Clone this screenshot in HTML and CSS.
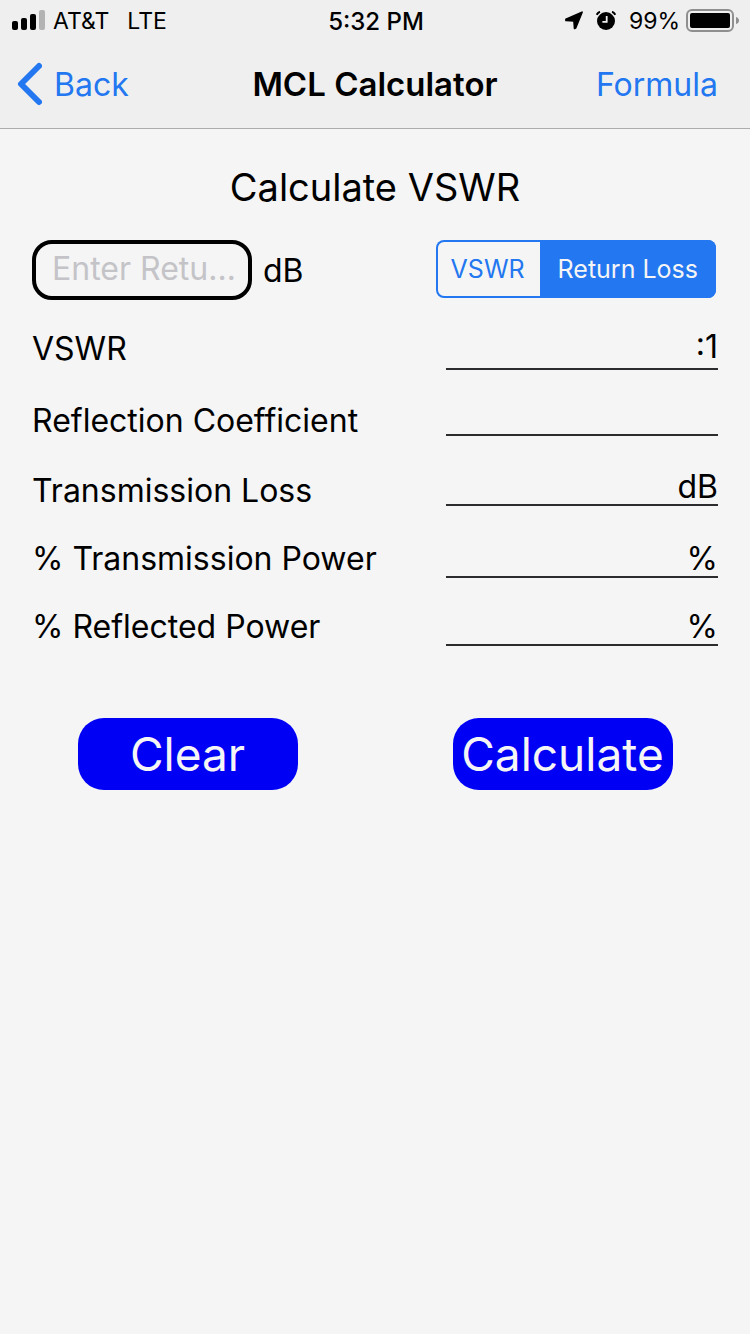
FILE: index.html
```html
<!DOCTYPE html>
<html lang="en">
<head>
  <meta charset="UTF-8" />
  <meta name="viewport" content="width=device-width, initial-scale=1.0"/>
  <title>MCL Calculator</title>
  <link rel="stylesheet" href="styles.css">
</head>
<body>
  <header>
    <div class="status-bar">
      <div class="status-left">
        <svg class="signal" width="34" height="22" viewBox="0 0 34 22">
          <rect x="0" y="11" width="6" height="9" rx="2"/>
          <rect x="9" y="8" width="6" height="12" rx="2"/>
          <rect x="18" y="4" width="6" height="16" rx="2"/>
          <rect x="27" y="0" width="6" height="20" rx="2" fill="#b3b3b3"/>
        </svg>
        <span class="carrier">AT&amp;T</span>
        <span>LTE</span>
      </div>
      <div class="clock">5:32 PM</div>
      <div class="status-right">
        <svg width="20" height="20" viewBox="0 0 20 20">
          <path d="M3 8.2 L19 1.2 L12.6 17 L11.6 17.4 L11 9.8 L3 9.4 Z" stroke="#000" stroke-width="1.8" stroke-linejoin="round"/>
        </svg>
        <svg class="alarm" width="20" height="20" viewBox="0 0 20 20">
          <circle cx="10" cy="10" r="9"/>
          <path d="M1 4.2 A6 6 0 0 1 4.2 1 M15.800 1 A6 6 0 0 1 19 4.2" fill="none" stroke="#efefef" stroke-width="4"/>
          <path d="M0.800 3.800 A5 5 0 0 1 4 0.800 M16 0.800 A5 5 0 0 1 19.200 3.800" fill="none" stroke="#000" stroke-width="2"/>
          <path d="M10.7 5 V10.800 H6.4" fill="none" stroke="#efefef" stroke-width="1.8"/>
        </svg>
        <span>99%</span>
        <svg class="battery" width="54" height="24" viewBox="0 0 54 24">
          <rect x="1" y="1" width="46" height="21" rx="5" fill="none" stroke="#8f8f8f" stroke-width="2"/>
          <rect x="4" y="4" width="40" height="15" rx="2"/>
          <path d="M50 8 Q53 9 53 11.5 Q53 14 50 15 Z" fill="#8f8f8f"/>
        </svg>
      </div>
    </div>
    <nav>
      <a href="#" class="back">
        <svg width="26" height="44" viewBox="0 0 26 44">
          <path d="M23 4 L5 22 L23 40" fill="none" stroke="#2377f0" stroke-width="6" stroke-linecap="round" stroke-linejoin="round"/>
        </svg>
        Back
      </a>
      <h1>MCL Calculator</h1>
      <a href="#" class="formula">Formula</a>
    </nav>
  </header>

  <main>
    <h2>Calculate VSWR</h2>
    <form>
      <div class="entry">
        <input type="text" id="value" class="value-input" placeholder="Enter Return Loss">
        <label for="value">dB</label>
        <div class="segmented">
          <input type="radio" name="mode" id="modeVswr">
          <label for="modeVswr">VSWR</label>
          <input type="radio" name="mode" id="modeLoss" checked>
          <label for="modeLoss" class="seg-wide">Return Loss</label>
        </div>
      </div>

      <div class="results">
        <div class="row row-first">
          <label for="vswr">VSWR</label>
          <output id="vswr">:1</output>
        </div>
        <div class="row row-low">
          <label for="reflection">Reflection Coefficient</label>
          <output id="reflection"></output>
        </div>
        <div class="row row-low">
          <label for="loss">Transmission Loss</label>
          <output id="loss">dB</output>
        </div>
        <div class="row">
          <label for="transmitted">% Transmission Power</label>
          <output id="transmitted">%</output>
        </div>
        <div class="row">
          <label for="reflected">% Reflected Power</label>
          <output id="reflected">%</output>
        </div>
      </div>

      <div class="actions">
        <button type="reset">Clear</button>
        <button type="button">Calculate</button>
      </div>
    </form>
  </main>
</body>
</html>
```
FILE: styles.css
```css
* {
  box-sizing: border-box;
}
body {
  margin: 0;
  font-family: Inter, "Liberation Sans", sans-serif;
  font-size: 32px;
  background-color: #f5f5f5;
  color: #000;
}
header {
  padding-bottom: 2px;
  background-color: #efefef;
  border-bottom: 1px solid #acacac;
}
.status-bar {
  display: grid;
  grid-template-columns: 1fr auto 1fr;
  align-items: center;
  height: 42px;
  padding: 0 10px 0 12px;
  font-size: 23px;
}
.status-left,
.status-right {
  display: flex;
  align-items: center;
}
.status-right {
  justify-content: flex-end;
}
.signal {
  margin-right: 7px;
}
.carrier {
  margin-right: 18px;
}
.clock {
  font-size: 24px;
  font-weight: 500;
}
.alarm {
  margin: 0 13px;
}
.battery {
  margin-left: 6px;
}
nav {
  display: grid;
  grid-template-columns: 1fr auto 1fr;
  align-items: center;
  height: 84px;
  padding: 0 16px;
}
nav a {
  color: #2377f0;
  text-decoration: none;
}
.back {
  display: flex;
  align-items: center;
  gap: 12px;
}
.formula {
  padding-right: 16px;
  text-align: right;
}
h1 {
  margin: 0;
  font-size: 33px;
  font-weight: 600;
}
main {
  padding: 32px 0;
}
h2 {
  margin: 0 0 26px;
  font-size: 38px;
  font-weight: 400;
  line-height: 53px;
  text-align: center;
}
.entry {
  display: flex;
  align-items: center;
  padding: 0 34px 0 32px;
}
.value-input {
  flex: 0 1 220px;
  min-width: 0;
  height: 60px;
  margin-right: 11px;
  padding: 0 4px 4px 16px;
  font: inherit;
  background: none;
  border: 4px solid #000;
  border-radius: 20px;
  text-overflow: ellipsis;
}
.value-input::placeholder {
  color: #c4c4c8;
}
.segmented {
  display: flex;
  align-self: flex-start;
  height: 58px;
  margin-left: auto;
  border-radius: 8px;
  box-shadow: inset 0 0 0 2px #2377f0;
  font-size: 25px;
  overflow: hidden;
}
.segmented input {
  position: absolute;
  opacity: 0;
}
.segmented label {
  display: flex;
  align-items: center;
  padding: 0 15px;
  color: #2377f0;
}
.segmented .seg-wide {
  padding: 0 18px;
}
.segmented input:checked + label {
  background-color: #2377f0;
  color: #f5f5f5;
}
.results {
  display: flex;
  flex-direction: column;
  gap: 30px;
  padding: 30px 32px 0;
}
.row {
  display: flex;
  align-items: flex-end;
  justify-content: space-between;
  line-height: 38px;
}
.row output {
  flex: 0 1 272px;
  height: 36px;
  line-height: 34px;
  text-align: right;
  border-bottom: 2px solid #2c2c2e;
}
.row-first label {
  padding-bottom: 2px;
}
.row-first output {
  height: 40px;
}
.row-low output {
  margin-bottom: 4px;
}
.actions {
  display: grid;
  grid-template-columns: 1fr 1fr;
  justify-items: center;
  margin-top: 72px;
}
button {
  width: 220px;
  height: 72px;
  padding: 0;
  font-family: inherit;
  font-size: 46px;
  color: #f5f5f5;
  background-color: #0000f5;
  border: none;
  border-radius: 26px;
}
```
